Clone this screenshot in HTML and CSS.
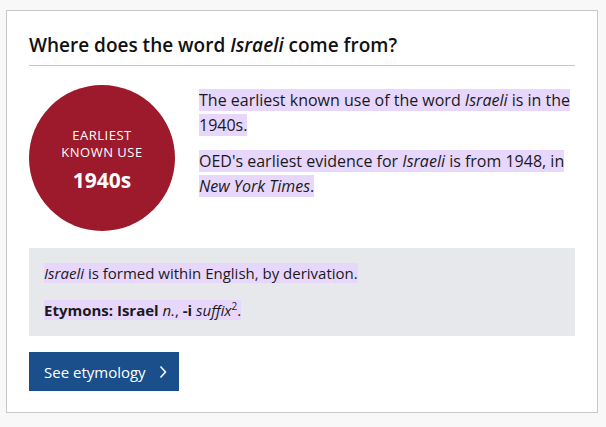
FILE: index.html
```html
<!DOCTYPE html>
<html lang="en">
<head>
<meta charset="utf-8">
<link rel="stylesheet" href="styles.css">
</head>
<body>
<section class="card">
  <h2 class="title">Where does the word <i>Israeli</i> come from?</h2>
  <div class="row">
    <div class="badge">
      <span class="badge-label">EARLIEST<br>KNOWN USE</span>
      <span class="badge-year">1940s</span>
    </div>
    <div class="text">
      <p><span class="hl">The earliest known use of the word <i>Israeli</i> is in the 1940s.</span></p>
      <p><span class="hl">OED's earliest evidence for <i>Israeli</i> is from 1948, in <i>New York Times</i>.</span></p>
    </div>
  </div>
  <div class="etym">
    <p><span class="hl"><i>Israeli</i> is formed within English, by derivation.</span></p>
    <p><span class="hl"><b>Etymons: Israel</b> <i>n.</i>, <b>-i</b> <i>suffix</i><sup>2</sup>.</span></p>
  </div>
  <a class="btn" href="#">See etymology
    <svg class="chev" width="8" height="14" viewBox="0 0 8 14"><path d="M1.5 1.5 L6.5 7 L1.5 12.5" fill="none" stroke="#fff" stroke-width="1.5"/></svg>
  </a>
</section>
</body>
</html>
```
FILE: styles.css
```css
html, body { margin: 0; padding: 0; }
body {
  background: #f8f8f8;
  font-family: "Open Sans", "Noto Sans", sans-serif;
  color: #1a1a1a;
  height: 427px;
  overflow: hidden;
}
.card {
  margin: 10px 8px 0 6px;
  background: #fff;
  border: 1px solid #c8c8c8;
  padding: 22px 22px 21px 22px;
}
.title {
  margin: 0;
  font-size: 19px;
  font-weight: 600;
  line-height: 24px;
  padding-bottom: 8px;
  border-bottom: 1px solid #c4c4c4;
  color: #111;
}
.title i { font-weight: 600; }
.row {
  display: flex;
  gap: 24px;
  margin-top: 19px;
}
.badge {
  flex: 0 0 146px;
  height: 146px;
  border-radius: 50%;
  background: #9c1a2b;
  color: #fff;
  display: flex;
  flex-direction: column;
  align-items: center;
  justify-content: center;
  text-align: center;
}
.badge-label {
  font-size: 13px;
  line-height: 17px;
  letter-spacing: 0.5px;
  margin-top: 4px;
}
.badge-year {
  font-size: 21px;
  font-weight: 700;
  line-height: 28px;
  margin-top: 5px;
}
.text { padding-top: 3px; }
.text p {
  margin: 0 0 11px 0;
  font-size: 16px;
  line-height: 25px;
}
.hl { background: #e8d7fc; }
.etym {
  margin-top: 17px;
  background: #e7e8eb;
  padding: 14px 15px 15px;
}
.etym p {
  margin: 0;
  font-size: 15px;
  line-height: 22px;
}
.etym p + p { margin-top: 15px; }
.etym sup { font-size: 10px; line-height: 0; }
.btn {
  display: inline-flex;
  align-items: center;
  gap: 13px;
  margin-top: 16px;
  height: 39px;
  padding: 0 12px 0 15px;
  background: #1a4f8b;
  color: #fff;
  text-decoration: none;
  font-size: 15px;
}
.chev { display: block; }
```
